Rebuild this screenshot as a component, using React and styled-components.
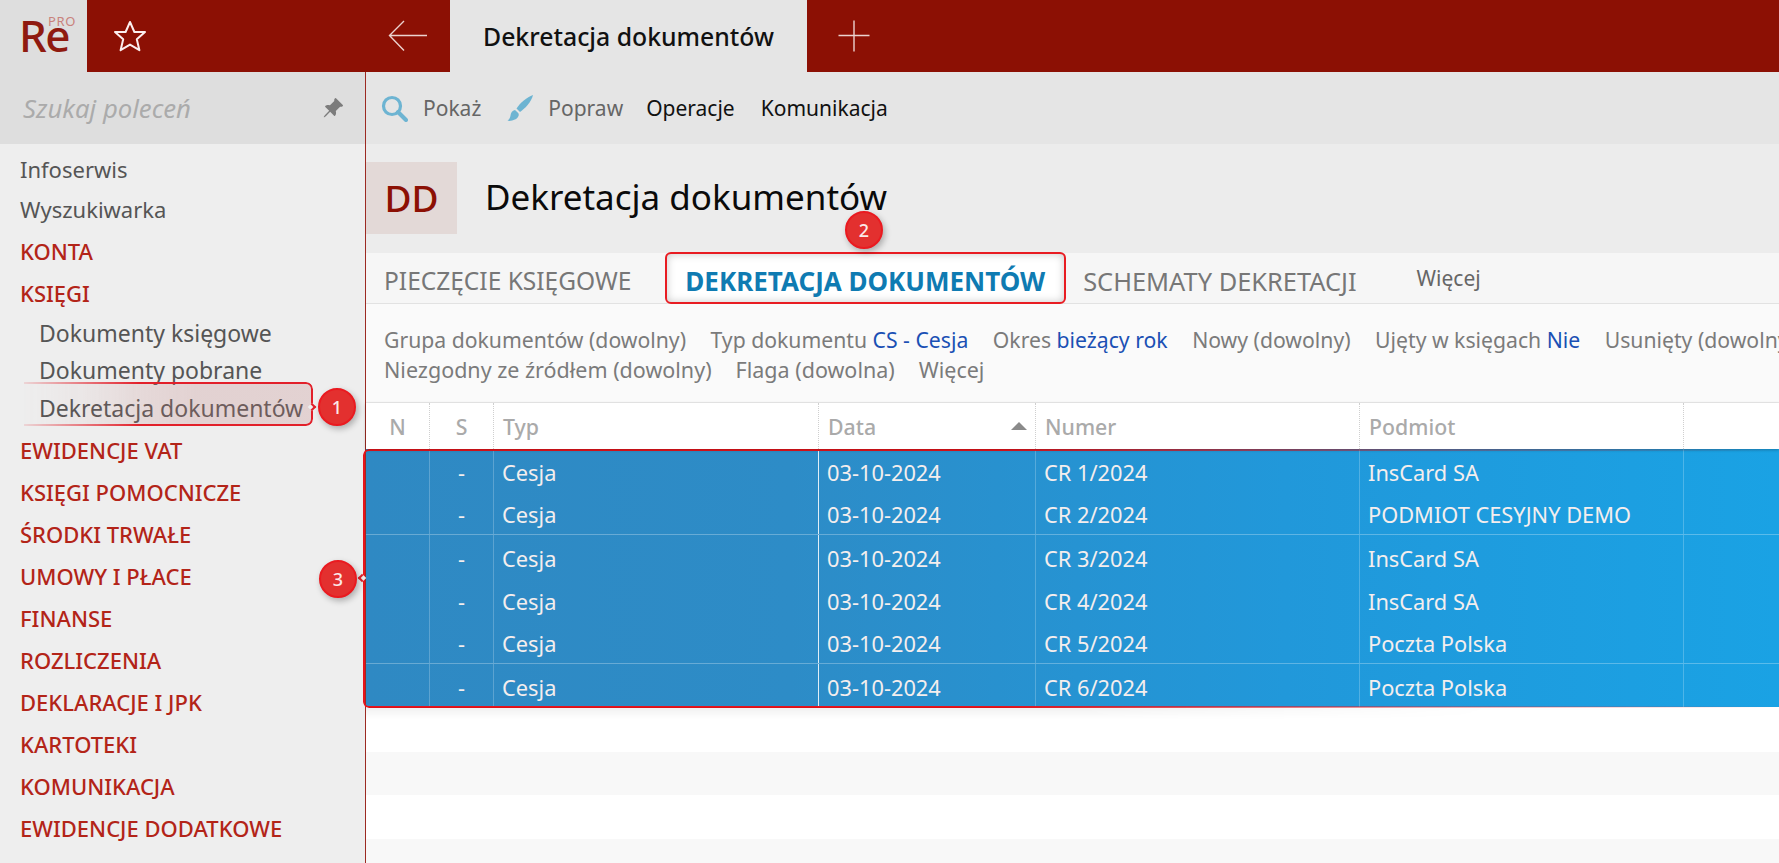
import React from "react";
import styled, { createGlobalStyle } from "styled-components";
import { BsPinAngleFill } from "react-icons/bs";

const GlobalStyle = createGlobalStyle`
  html, body {
    margin: 0;
    padding: 0;
    background: #fff;
  }
  body {
    font-family: "Noto Sans", "Open Sans", "Liberation Sans", sans-serif;
    overflow: hidden;
  }
  * {
    box-sizing: border-box;
  }
`;

const Page = styled.div`
  width: 1779px;
  height: 863px;
  display: flex;
  flex-direction: column;
  overflow: hidden;
`;

// górny pasek
const TopBar = styled.div`
  height: 72px;
  display: flex;
  background: #8c1004;
  flex-shrink: 0;
`;
const LogoBox = styled.div`
  width: 87px;
  background: #dedede;
  padding: 16px 0 0 19px;
`;
const Logo = styled.div`
  position: relative;
  width: 60px;
  color: #8f1a10;
  font-size: 44px;
  font-weight: 550;
  line-height: 38px;
  letter-spacing: -1.5px;
`;
const LogoPro = styled.span`
  position: absolute;
  top: -1px;
  left: 29px;
  color: #c9827c;
  font-size: 13px;
  line-height: 13px;
  font-weight: 400;
  letter-spacing: 0.6px;
`;
const StarBtn = styled.div`
  width: 276px;
  padding-left: 26px;
  display: flex;
  align-items: center;
`;
const BackBtn = styled.div`
  width: 87px;
  padding-left: 25px;
  display: flex;
  align-items: center;
`;
const ActiveTab = styled.div`
  width: 357px;
  background: #e5e5e5;
  color: #111;
  font-size: 24.800px;
  font-weight: 500;
  padding-left: 33px;
  display: flex;
  align-items: center;
`;
const PlusBtn = styled.div`
  padding-left: 31px;
  display: flex;
  align-items: center;
`;

const Body = styled.div`
  flex: 1;
  display: flex;
  min-height: 0;
`;

// lewe menu
const Sidebar = styled.div`
  width: 366px;
  flex-shrink: 0;
  background: #eeeeee;
  border-right: 1px solid #9c2a22;
`;
const SearchRow = styled.div`
  height: 72px;
  background: #dedede;
  display: flex;
  align-items: center;
  justify-content: space-between;
  padding: 0 21px 0 23px;
  color: #ababab;
  font-size: 25.700px;
  font-style: italic;
`;
const Menu = styled.div`
  padding-top: 5px;
`;
const MenuLink = styled.div`
  height: 40px;
  padding-left: 20px;
  display: flex;
  align-items: center;
  color: #555;
  font-size: 22px;
`;
const MenuLinks = styled.div`
  padding-bottom: 1px;
`;
const MenuGroup = styled.div`
  height: 42px;
  padding-left: 20px;
  display: flex;
  align-items: center;
  color: #b32418;
  font-size: 22px;
  font-weight: 500;
`;
const SubMenu = styled.div`
  padding-bottom: 2.5px;
`;
const SubLink = styled.div`
  position: relative;
  height: 37.5px;
  padding-left: 39px;
  display: flex;
  align-items: center;
  color: #555;
  font-size: 23px;
`;
const Highlight = styled.div`
  position: absolute;
  top: -7px;
  left: 24px;
  width: 289px;
  height: 44px;
  border: 2px solid #e2202a;
  border-left: none;
  border-radius: 0 7px 7px 0;
  background: linear-gradient(to right, rgba(200, 130, 130, 0.05), rgba(190, 120, 120, 0.24) 60%);
  box-shadow: 3px 4px 8px rgba(0, 0, 0, 0.16);
  mask-image: linear-gradient(to right, rgba(0, 0, 0, 0.12), #000 40%);
`;
const Notch = styled.span`
  position: absolute;
  width: 6px;
  height: 6px;
  top: ${(p) => p.$top}px;
  left: ${(p) => p.$left}px;
  border-left: 2px solid #e2202a;
  border-bottom: 2px solid #e2202a;
  background: #eeeeee;
  transform: rotate(${(p) => (p.$flip ? 45 : 225)}deg);
  z-index: 2;
`;
const Badge = styled.div`
  position: absolute;
  width: 38px;
  height: 38px;
  border-radius: 50%;
  background: #e3302f;
  border: 2px solid #ea1a20;
  color: #fbe9e9;
  font-size: 18px;
  font-weight: 500;
  display: flex;
  align-items: center;
  justify-content: center;
  box-shadow: 2px 3px 6px rgba(0, 0, 0, 0.28);
  z-index: 5;
  top: ${(p) => p.$top}px;
  left: ${(p) => p.$left}px;
`;

// prawa strona
const Main = styled.div`
  flex: 1;
  min-width: 0;
  display: flex;
  flex-direction: column;
  background: #fff;
`;
const Toolbar = styled.div`
  height: 72px;
  background: #e5e5e5;
  display: flex;
  align-items: center;
  padding-left: 15px;
  flex-shrink: 0;
`;
const ToolBtn = styled.div`
  display: flex;
  align-items: center;
  gap: 15px;
  margin-right: ${(p) => p.$gap}px;
  color: ${(p) => (p.$dark ? "#111" : "#666")};
  font-size: 21px;
`;
const TitleRow = styled.div`
  height: 109px;
  background: #ececec;
  padding-top: 18px;
  flex-shrink: 0;
`;
const TitleInner = styled.div`
  display: flex;
  align-items: center;
`;
const Initials = styled.div`
  width: 91px;
  height: 72px;
  background: #e3d9d7;
  color: #8c1004;
  font-size: 37px;
  font-weight: 550;
  display: flex;
  align-items: center;
  justify-content: center;
  padding-bottom: 2px;
`;
const Title = styled.div`
  margin-left: 28px;
  padding-bottom: 4px;
  color: #0a0a0a;
  font-size: 35px;
`;
const Tabs = styled.div`
  height: 51px;
  background: #f6f6f6;
  border-bottom: 1px solid #e2e2e2;
  display: flex;
  align-items: center;
  padding-left: 18px;
  flex-shrink: 0;
`;
const Tab = styled.div`
  color: #777;
  font-size: ${(p) => p.$size}px;
  margin-top: 5px;
  margin-right: ${(p) => p.$gap}px;
`;
const TabActive = styled.div`
  height: 52px;
  margin: 0 17px 0 34px;
  padding: 5px 19px 0 18px;
  display: flex;
  align-items: center;
  border: 2px solid #e81c22;
  border-radius: 6px;
  background: #fff;
  color: #0f7bb2;
  font-size: 26px;
  font-weight: 700;
  box-shadow: inset 0 0 8px rgba(0, 0, 0, 0.22);
`;
const TabMore = styled.div`
  color: #666;
  font-size: 21px;
`;
const Filters = styled.div`
  height: 99px;
  background: #fafafa;
  border-bottom: 1px solid #ececec;
  padding: 20px 0 0 18px;
  flex-shrink: 0;
  overflow: hidden;
`;
const FilterLine = styled.div`
  height: 30px;
  display: flex;
  align-items: center;
  gap: ${(p) => p.$gap}px;
  white-space: nowrap;
  color: #7b7b7b;
  font-size: ${(p) => p.$size}px;
`;
const FilterValue = styled.span`
  color: #1a50b4;
`;
const HeaderRow = styled.div`
  height: 46px;
  display: grid;
  grid-template-columns: 64px 64px 325px 217px 324px 324px 1fr;
  background: #fff;
  position: relative;
  z-index: 1;
  box-shadow: 0 1px 3px rgba(0, 0, 0, 0.25);
  flex-shrink: 0;
`;
const HeadCell = styled.div`
  display: flex;
  align-items: center;
  justify-content: ${(p) => (p.$center ? "center" : "space-between")};
  padding: 0 ${(p) => (p.$center ? 0 : 9)}px;
  border-right: 1px dotted #cfcfcf;
  color: #aaa;
  font-size: 21.300px;
  font-weight: 500;
`;
const SortMark = styled.span`
  width: 0;
  height: 0;
  margin-right: -1px;
  border-left: 8px solid transparent;
  border-right: 8px solid transparent;
  border-bottom: 8px solid #8a8a8a;
`;
const RowsBox = styled.div`
  position: relative;
  background: linear-gradient(to right, #2f89c3, #2d8cc7 30%, #2198da 65%, #1aa2e4);
  flex-shrink: 0;
`;
const RedFrame = styled.div`
  position: absolute;
  top: 0;
  left: -3px;
  right: 0;
  bottom: -1px;
  border: 2px solid #e8131b;
  border-right: none;
  border-radius: 6px 0 0 6px;
  mask-image: linear-gradient(to right, #000 45%, rgba(0, 0, 0, 0.35) 75%, transparent);
  pointer-events: none;
`;
const FrameShadow = styled.div`
  height: 12px;
  background: linear-gradient(to bottom, rgba(0, 0, 0, 0.06), transparent);
  mask-image: linear-gradient(to right, #000 50%, transparent 80%);
`;
const DataRow = styled.div`
  height: 43px;
  display: grid;
  grid-template-columns: 64px 64px 325px 217px 324px 324px 1fr;
  border-bottom: ${(p) => (p.$line ? "1px solid rgba(255,255,255,0.28)" : "none")};
`;
const Cell = styled.div`
  display: flex;
  align-items: center;
  justify-content: ${(p) => (p.$center ? "center" : "flex-start")};
  padding: 3px 0 0 ${(p) => (p.$center ? 0 : 8)}px;
  border-right: 1px solid ${(p) => (p.$bright ? "rgba(255,255,255,0.85)" : "rgba(255,255,255,0.22)")};
  color: #f4eeee;
  font-size: 21.800px;
`;
const EmptyRow = styled.div`
  height: ${(p) => p.$h}px;
  background: ${(p) => (p.$gray ? "#f8f8f8" : "#fff")};
  flex-shrink: 0;
`;

const rows = [
  { nr: "CR 1/2024", who: "InsCard SA" },
  { nr: "CR 2/2024", who: "PODMIOT CESYJNY DEMO", line: true },
  { nr: "CR 3/2024", who: "InsCard SA" },
  { nr: "CR 4/2024", who: "InsCard SA" },
  { nr: "CR 5/2024", who: "Poczta Polska", line: true },
  { nr: "CR 6/2024", who: "Poczta Polska" },
];

const groupsAfter = [
  "EWIDENCJE VAT",
  "KSIĘGI POMOCNICZE",
  "ŚRODKI TRWAŁE",
  "UMOWY I PŁACE",
  "FINANSE",
  "ROZLICZENIA",
  "DEKLARACJE I JPK",
  "KARTOTEKI",
  "KOMUNIKACJA",
  "EWIDENCJE DODATKOWE",
];

const StarIcon = () => (
  <svg width="34" height="32" viewBox="0 0 34 32" fill="none" stroke="#fbeeee" strokeWidth="2" strokeLinejoin="round">
    <path d="M17 2l4.400 10h10.600l-8.200 7.200 2.600 11L17 24.600 7.600 30.200l2.600-11L2 12h10.600z" />
  </svg>
);

const BackIcon = () => (
  <svg width="40" height="32" viewBox="0 0 40 32" fill="none" stroke="#ecd2cf" strokeWidth="1.4">
    <path d="M39 15.500H1.500M16 1L1.500 15.500 16 30.500" />
  </svg>
);

const PlusIcon = () => (
  <svg width="32" height="32" viewBox="0 0 32 32" fill="none" stroke="#ecd2cf" strokeWidth="1.4">
    <path d="M0.500 15.500H31.500M16 0.500V31.500" />
  </svg>
);

const SearchIcon = () => (
  <svg width="27" height="27" viewBox="0 0 27 27" fill="none" stroke="#6db4d2" strokeWidth="3.2">
    <circle cx="11" cy="11" r="8.500" />
    <path d="M17 17l8 8" strokeWidth="4" strokeLinecap="round" />
  </svg>
);

const BrushIcon = () => (
  <svg width="26" height="26" viewBox="0 0 26 26" fill="#6db4d2">
    <path d="M26 0C20 2 13 8 9.500 13.500l3.500 3.500C18 13.500 24.500 7 26 0z" />
    <path d="M8 15c-3 .8-4.200 3-4.500 5.500C3.200 23 2 24.500 .500 26c3.500 0 8.500-.8 10.500-4 1.200-1.800 .8-3.200 .2-4z" />
  </svg>
);

const App = () => {
  return (
    <Page>
      <GlobalStyle />
      <TopBar>
        <LogoBox>
          <Logo>
            Re
            <LogoPro>PRO</LogoPro>
          </Logo>
        </LogoBox>
        <StarBtn>
          <StarIcon />
        </StarBtn>
        <BackBtn>
          <BackIcon />
        </BackBtn>
        <ActiveTab>Dekretacja dokumentów</ActiveTab>
        <PlusBtn>
          <PlusIcon />
        </PlusBtn>
      </TopBar>
      <Body>
        <Sidebar>
          <SearchRow>
            Szukaj poleceń
            <BsPinAngleFill size={22} color="#7c7c7c" />
          </SearchRow>
          <Menu>
            <MenuLinks>
              <MenuLink>Infoserwis</MenuLink>
              <MenuLink>Wyszukiwarka</MenuLink>
            </MenuLinks>
            <MenuGroup>KONTA</MenuGroup>
            <MenuGroup>KSIĘGI</MenuGroup>
            <SubMenu>
              <SubLink>Dokumenty księgowe</SubLink>
              <SubLink>Dokumenty pobrane</SubLink>
              <SubLink>
                <Highlight />
                <Notch $top={15} $left={309} />
                Dekretacja dokumentów
              </SubLink>
            </SubMenu>
            {groupsAfter.map((g) => (
              <MenuGroup key={g}>{g}</MenuGroup>
            ))}
          </Menu>
        </Sidebar>
        <Main>
          <Toolbar>
            <ToolBtn $gap={26}>
              <SearchIcon />
              Pokaż
            </ToolBtn>
            <ToolBtn $gap={23}>
              <BrushIcon />
              Popraw
            </ToolBtn>
            <ToolBtn $gap={26} $dark>Operacje</ToolBtn>
            <ToolBtn $dark>Komunikacja</ToolBtn>
          </Toolbar>
          <TitleRow>
            <TitleInner>
              <Initials>DD</Initials>
              <Title>Dekretacja dokumentów</Title>
            </TitleInner>
          </TitleRow>
          <Tabs>
            <Tab $size={24.5}>PIECZĘCIE KSIĘGOWE</Tab>
            <TabActive>DEKRETACJA DOKUMENTÓW</TabActive>
            <Tab $size={25.4} $gap={60}>SCHEMATY DEKRETACJI</Tab>
            <TabMore>Więcej</TabMore>
          </Tabs>
          <Filters>
            <FilterLine $gap={24.5} $size={21.2}>
              <span>Grupa dokumentów (dowolny)</span>
              <span>Typ dokumentu <FilterValue>CS - Cesja</FilterValue></span>
              <span>Okres <FilterValue>bieżący rok</FilterValue></span>
              <span>Nowy (dowolny)</span>
              <span>Ujęty w księgach <FilterValue>Nie</FilterValue></span>
              <span>Usunięty (dowolny)</span>
            </FilterLine>
            <FilterLine $gap={24} $size={21.5}>
              <span>Niezgodny ze źródłem (dowolny)</span>
              <span>Flaga (dowolna)</span>
              <span>Więcej</span>
            </FilterLine>
          </Filters>
          <HeaderRow>
            <HeadCell $center>N</HeadCell>
            <HeadCell $center>S</HeadCell>
            <HeadCell>Typ</HeadCell>
            <HeadCell>Data<SortMark /></HeadCell>
            <HeadCell>Numer</HeadCell>
            <HeadCell>Podmiot</HeadCell>
          </HeaderRow>
          <RowsBox>
            {rows.map((r) => (
              <DataRow key={r.nr} $line={r.line}>
                <Cell $center />
                <Cell $center>-</Cell>
                <Cell $bright>Cesja</Cell>
                <Cell>03-10-2024</Cell>
                <Cell>{r.nr}</Cell>
                <Cell>{r.who}</Cell>
              </DataRow>
            ))}
            <RedFrame />
            <Notch $top={126} $left={-7} $flip />
          </RowsBox>
          <FrameShadow />
          <EmptyRow $h={33} />
          <EmptyRow $h={43} $gray />
          <EmptyRow $h={44} />
          <EmptyRow $h={24} $gray />
        </Main>
      </Body>
      <Badge $top={388} $left={318}>1</Badge>
      <Badge $top={211} $left={845}>2</Badge>
      <Badge $top={560} $left={319}>3</Badge>
    </Page>
  );
};

export default App;
